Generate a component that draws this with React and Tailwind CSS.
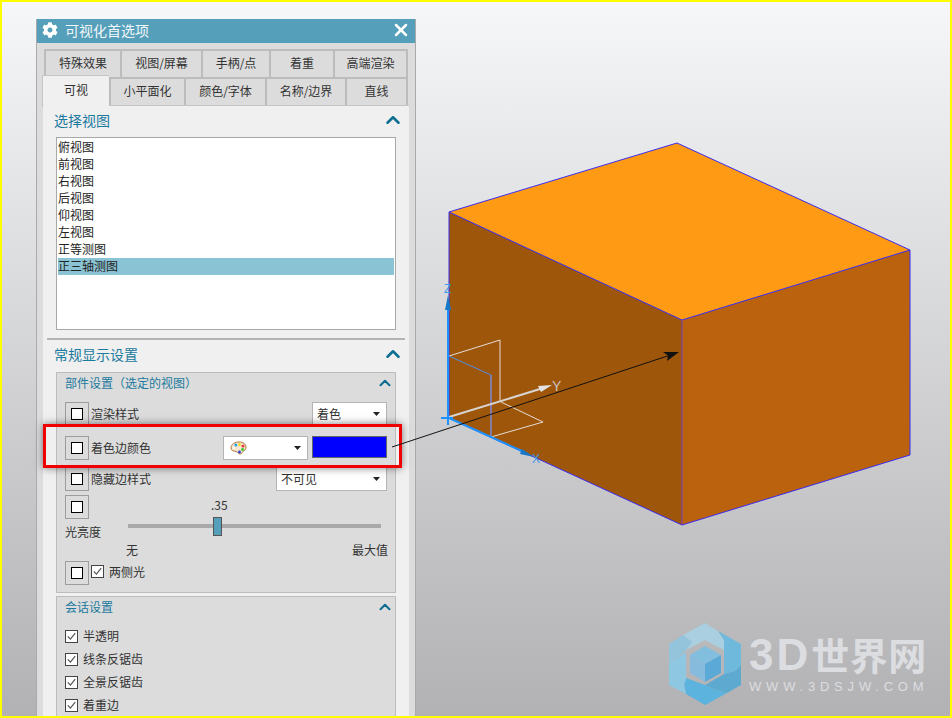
import React from 'react';
import { FaCog } from 'react-icons/fa';
import { ChevronUp, X } from 'lucide-react';

const topTabs = [
  { label: '特殊效果', width: 'w-[76px]' },
  { label: '视图/屏幕', width: 'w-[81px]' },
  { label: '手柄/点', width: 'w-[68px]' },
  { label: '着重', width: 'w-[64px]' },
  { label: '高端渲染', width: 'w-[73px]' },
];

const bottomTabs = [
  { label: '小平面化', width: 'w-[75px]' },
  { label: '颜色/字体', width: 'w-[81px]' },
  { label: '名称/边界', width: 'w-[80px]' },
  { label: '直线', width: 'w-[61px]' },
];

const views = ['俯视图', '前视图', '右视图', '后视图', '仰视图', '左视图', '正等测图', '正三轴测图'];
const sessionOptions = ['半透明', '线条反锯齿', '全景反锯齿', '着重边'];

const Tab = ({ label, width }) => (
  <div className={`${width} h-[28px] shrink-0 flex items-center justify-center pb-[2px] bg-[#dcdcdc] border-t-2 border-l-2 border-[#bcbcbc] text-[12px] text-[#333]`}>
    {label}
  </div>
);

const SectionHeader = ({ label, className }) => (
  <div className={`flex items-center justify-between pb-[4px] ${className}`}>
    <span className="text-[14px] leading-[20px] text-[#1b7a9e]">{label}</span>
    <ChevronUp size={22} strokeWidth={2.800} className="text-[#0f6f90]" />
  </div>
);

const GroupHeader = ({ label }) => (
  <div className="h-[22px] flex items-center justify-between pb-[2px] pl-[8px] pr-[1px]">
    <span className="text-[12px] text-[#1b7a9e]">{label}</span>
    <ChevronUp size={18} strokeWidth={2.800} className="text-[#0f6f90]" />
  </div>
);

const MemberButton = () => (
  <div className="w-[24px] h-[24px] shrink-0 flex items-center justify-center bg-[#dcdcdc] border border-[#9c9c9c]">
    <div className="w-[12px] h-[12px] bg-white border border-black" />
  </div>
);

const Caret = () => (
  <svg width="7" height="4" viewBox="0 0 7 4" className="shrink-0">
    <path d="M0 0h7L3.5 4z" fill="#222" />
  </svg>
);

const Dropdown = ({ width, children }) => (
  <div className={`${width} h-[24px] shrink-0 flex items-center justify-between bg-white border border-[#b4b4b4] pl-[4px] pr-[6px] text-[12px] text-[#333]`}>
    <span className="flex items-center">{children}</span>
    <Caret />
  </div>
);

const Checkbox = () => (
  <div className="w-[13px] h-[13px] shrink-0 bg-white border border-[#444]">
    <svg width="11" height="11" viewBox="0 0 11 11">
      <path d="M1.8 5.4 4.4 8.2 9.2 2.2" fill="none" stroke="#555" strokeWidth="1.2" />
    </svg>
  </div>
);

const Palette = () => (
  <svg width="17" height="14" viewBox="0 0 17 14" className="ml-[2px]">
    <path d="M1 7C1 3 5 1 9 1c4 0 7 2 7 5 0 3-2 3.500-3 4.500-1 1-1 2.500-3 2.500C8 13 8 11 6 10.500 4 10 1 10 1 7z" fill="#f7e6cf" stroke="#b5783c" strokeWidth="1" />
    <circle cx="9.500" cy="3.400" r="1.500" fill="#f5e020" />
    <circle cx="5.800" cy="4" r="1.500" fill="#23a7e8" />
    <circle cx="13" cy="5" r="1.500" fill="#e83a3a" />
    <circle cx="12.500" cy="8.500" r="1.400" fill="#35c935" />
    <circle cx="9.500" cy="11" r="1.400" fill="#2a3fd0" />
    <circle cx="3.800" cy="7" r="1" fill="#fff" />
  </svg>
);

// model, triad and the background of the graphics window
const Scene = () => (
  <svg width="948" height="714" viewBox="2 2 948 714" className="absolute inset-0">
    <polygon points="449,212 677,143 910,250 682,320" fill="#ff9a14" />
    <polygon points="449,212 682,320 682,525 449,418" fill="#9e560b" />
    <polygon points="682,320 910,250 910,455 682,525" fill="#ba620e" />
    <path d="M449 212 677 143 910 250 910 455 682 525 449 418Z M449 212 682 320 910 250" fill="none" stroke="#3a2cf0" strokeWidth="1" />
    <path d="M682 320V525" stroke="#7a3fc0" strokeWidth="1" />

    <path d="M449 356 500 340V401M501 402 543 422 491 437" fill="none" stroke="#e6dcd6" strokeWidth="1" />
    <path d="M449 356 491 375" fill="none" stroke="#4f8fe8" strokeWidth="1" />
    <path d="M491 375V437" fill="none" stroke="#7f88d8" strokeWidth="1.500" />
    <path d="M449 417 540 389" stroke="#d8d4d0" strokeWidth="2" />
    <path d="M538 386 552 385 541 392Z" fill="#e4e4e4" />
    <path d="M448 418V300" stroke="#1e90ff" strokeWidth="2" />
    <path d="M448 295 445 310H451Z" fill="#1878c8" />
    <path d="M441 418H453M448 418V425" stroke="#1e90ff" strokeWidth="2" />
    <path d="M449 418 524 452" stroke="#1e90ff" strokeWidth="2" />
    <path d="M522 449 534 457 520 454Z" fill="#1878c8" />
    <text x="444" y="293" fontSize="12" fill="#3f9be8" fontFamily="Liberation Sans, sans-serif">Z</text>
    <text x="552" y="391" fontSize="14" fill="#c8c4c0" fontFamily="Liberation Sans, sans-serif">Y</text>
    <text x="532" y="463" fontSize="12" fill="#3f9be8" fontFamily="Liberation Sans, sans-serif">X</text>

    <polygon points="683,635 705,623 718,631 724,640 724,650 705,640 686,650 692,642" fill="#a9cfe0" />
    <polygon points="718,631 741,644 741,665 735,671 724,674 724,650 724,640" fill="#6fb9dc" />
    <polygon points="741,665 741,685 727,693 715,690 705,685 724,674 735,671" fill="#5ea9d0" />
    <polygon points="727,693 705,705 686,694 684,685 686,678 705,685 715,690" fill="#5bb3de" />
    <polygon points="669,664 677,658 686,652 686,678 684,685 686,694 669,685" fill="#8ec7e2" />
    <polygon points="683,635 692,642 686,650 677,658 669,664 669,644" fill="#93c4dc" />
    <polygon points="705,646 721,655 705,664 690,655" fill="#82bfdf" />
    <polygon points="690,655 705,664 705,682 690,673" fill="#86bbdd" />
    <polygon points="721,655 721,673 705,682 705,664" fill="#5aa9d6" />
  </svg>
);

export default function App() {
  return (
    <div className="relative w-[952px] h-[718px] overflow-hidden border-2 border-[#ffff00] bg-gradient-to-b from-[#f6f7f9] to-[#b2b2b4] font-['Noto_Sans_CJK_SC','Liberation_Sans',sans-serif]">
      <Scene />

      {/* watermark */}
      <div className="absolute left-[747px] top-[630px] flex flex-col text-[#dcdde0]">
        <div className="h-[48px] flex items-baseline whitespace-nowrap font-bold leading-[44px]">
          <span className="text-[44px] tracking-[3px] font-['Liberation_Sans',sans-serif]">3D</span>
          <span className="text-[38px] tracking-[0.5px]">世界网</span>
        </div>
        <span className="text-[13px] leading-[14px] tracking-[4.8px] font-['Liberation_Sans',sans-serif] whitespace-nowrap">WWW.3DSJW.COM</span>
      </div>

      {/* preferences dialog */}
      <div className="relative ml-[34px] mt-[17px] w-[380px] h-[699px] overflow-hidden flex flex-col bg-[#dcdcdc] border-x border-[#a9a9a9]">
        <div className="h-[24px] shrink-0 flex items-center justify-between bg-[#559fba] pb-[2px] pl-[6px] pr-[5px] -mx-px">
          <div className="flex items-center gap-[7px] text-white">
            <FaCog size={16} />
            <span className="text-[14px] leading-[20px] text-[#f2f7f9]">可视化首选项</span>
          </div>
          <X size={20} strokeWidth={3} className="text-white" />
        </div>

        <div className="flex ml-[7px] mt-[6px]">
          {topTabs.map((tab) => <Tab key={tab.label} {...tab} />)}
          <div className="w-[2px] bg-[#bcbcbc]" />
        </div>
        <div className="flex ml-[5px]">
          <div className="relative z-10 w-[67px] h-[32px] -my-[2px] shrink-0 flex items-center justify-center pb-[3px] bg-[#f0f0f0] border-t border-l border-[#c4c4c4] text-[12px] text-[#333]">
            可视
          </div>
          {bottomTabs.map((tab) => <Tab key={tab.label} {...tab} />)}
          <div className="w-[2px] bg-[#bcbcbc]" />
        </div>

        <div className="flex-1 ml-[6px] mr-[6px] min-h-0 bg-[#f0f0f0] border-t border-[#c4c4c4] flex flex-col px-[13px]">
          <SectionHeader label="选择视图" className="h-[31px] -ml-[2px] -mr-[8px] shrink-0" />
          <div className="h-[193px] shrink-0 bg-white border border-[#a8a8a8] p-px">
            {views.map((view, i) => (
              <div key={view} className={`h-[17px] leading-[15px] text-[12px] text-[#222] ${i === 7 ? 'bg-[#8ac3d4]' : ''}`}>{view}</div>
            ))}
          </div>
          <div className="h-[2px] shrink-0 mt-[8px] -mx-[9px] bg-[#b4b4b4]" />
          <SectionHeader label="常规显示设置" className="h-[32px] -ml-[2px] -mr-[8px] shrink-0" />

          <div className="h-[221px] shrink-0 bg-[#dcdcdc] border border-[#bcbcbc]">
            <GroupHeader label="部件设置（选定的视图）" />
            <div className="flex flex-col px-[8px] pt-[7px] text-[12px] text-[#333]">
              <div className="flex items-center justify-between">
                <div className="flex items-center gap-[2px]"><MemberButton />渲染样式</div>
                <Dropdown width="w-[75px]">着色</Dropdown>
              </div>
              <div className="flex items-center mt-[10px]">
                <div className="flex items-center gap-[2px] w-[158px]"><MemberButton />着色边颜色</div>
                <Dropdown width="w-[85px]"><Palette /></Dropdown>
                <div className="ml-[4px] w-[75px] h-[22px] -mt-[3px] bg-[#0000ff] border border-[#666]" />
              </div>
              <div className="flex items-center justify-between mt-[7px]">
                <div className="flex items-center gap-[2px]"><MemberButton />隐藏边样式</div>
                <Dropdown width="w-[111px]">不可见</Dropdown>
              </div>
              <div className="flex items-start mt-[4px] h-[22px]">
                <MemberButton />
                <span className="ml-[122px] leading-[20px]">.35</span>
              </div>
              <div className="flex items-start h-[26px]">
                <span className="w-[63px] mt-[6px] leading-[17px]">光亮度</span>
                <div className="relative w-[253px] h-[19px] flex items-center">
                  <div className="w-full h-[4px] -mt-[1px] bg-[#a9a9a9]" />
                  <div className="absolute left-[85px] top-0 w-[9px] h-[19px] bg-[#559fba] border border-[#555]" />
                </div>
              </div>
              <div className="flex justify-between h-[16px] leading-[13px] pl-[61px] -mr-px">
                <span>无</span>
                <span>最大值</span>
              </div>
              <div className="flex items-center gap-[2px] mt-[2px]">
                <MemberButton />
                <div className="flex items-center gap-[5px] -mt-[3px]">
                  <Checkbox />
                  <span>两侧光</span>
                </div>
              </div>
            </div>
          </div>

          <div className="h-[140px] shrink-0 mt-[3px] bg-[#dcdcdc] border border-[#bcbcbc]">
            <GroupHeader label="会话设置" />
            <div className="flex flex-col gap-[10px] px-[8px] pt-[11px] text-[12px] text-[#333]">
              {sessionOptions.map((option) => (
                <div key={option} className="h-[13px] flex items-center gap-[5px]">
                  <Checkbox />
                  <span className="pb-[2px]">{option}</span>
                </div>
              ))}
            </div>
          </div>
        </div>
      </div>

      {/* annotation over the dialog */}
      <div className="absolute left-[41px] top-[422px] w-[359px] h-[44px] border-[3px] border-[#f00000] shadow-[0_0_8px_rgba(0,0,0,0.5)]" />
      <svg width="948" height="714" viewBox="2 2 948 714" className="absolute inset-0 pointer-events-none">
        <path d="M392 447 672 354.500" stroke="#111" strokeWidth="1" />
        <path d="M679 352 663 352 668 355.500 667 361Z" fill="#111" />
      </svg>
    </div>
  );
}
